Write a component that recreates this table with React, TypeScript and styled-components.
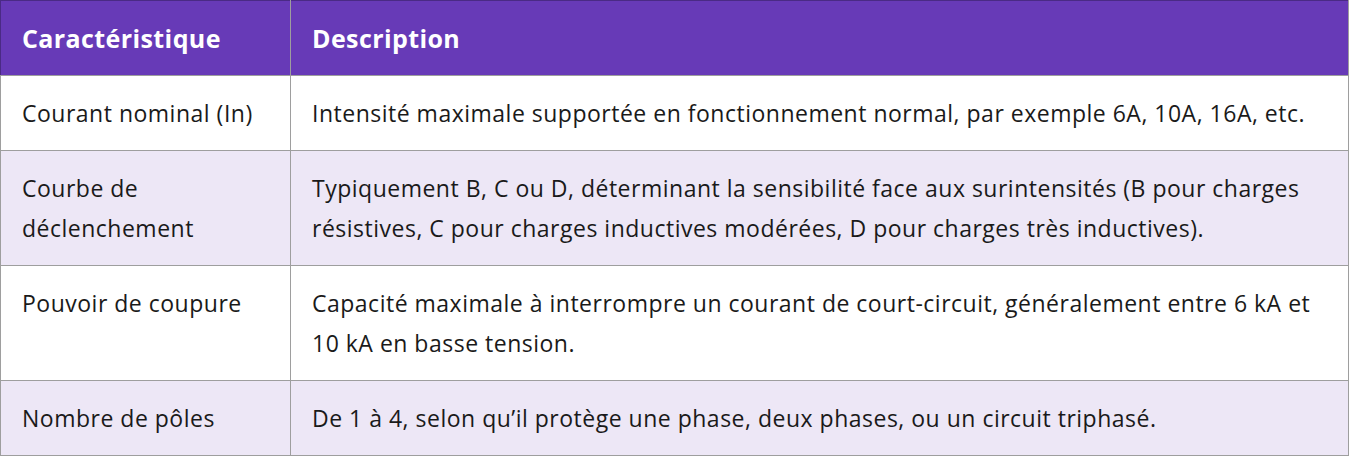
import styled, { createGlobalStyle } from "styled-components";

const GlobalStyle = createGlobalStyle`
  html, body {
    margin: 0;
    padding: 0;
    background: #ffffff;
  }
  body {
    font-family: "Open Sans", "Noto Sans", sans-serif;
    color: #1a1a1a;
  }
`;

const Table = styled.table`
  width: 1349px;
  border-collapse: collapse;
  table-layout: fixed;
  border: 1px solid #9e9e9e;
  font-size: 23px;
  line-height: 40px;
  letter-spacing: 0.5px;
`;

const HeadCell = styled.th<{ $first?: boolean }>`
  width: ${(p) => (p.$first ? "256px" : "auto")};
  padding: 17px 12px 17px 21px;
  background: #673ab7;
  color: #ffffff;
  font-size: 25px;
  font-weight: 700;
  letter-spacing: 0.4px;
  text-align: left;
  border: 1px solid #9e9e9e;
  border-color: #4a2a85 #9e9e9e #9e9e9e #4a2a85;
`;

const Row = styled.tr<{ $striped?: boolean }>`
  background: ${(p) => (p.$striped ? "#ede7f6" : "#ffffff")};
`;

const Cell = styled.td`
  padding: 17px 12px 17px 21px;
  border: 1px solid #9e9e9e;
  vertical-align: top;
`;

const rows = [
  {
    name: "Courant nominal (In)",
    text: "Intensité maximale supportée en fonctionnement normal, par exemple 6A, 10A, 16A, etc.",
  },
  {
    name: "Courbe de déclenchement",
    text: "Typiquement B, C ou D, déterminant la sensibilité face aux surintensités (B pour charges résistives, C pour charges inductives modérées, D pour charges très inductives).",
  },
  {
    name: "Pouvoir de coupure",
    text: "Capacité maximale à interrompre un courant de court-circuit, généralement entre 6 kA et 10 kA en basse tension.",
  },
  {
    name: "Nombre de pôles",
    text: "De 1 à 4, selon qu’il protège une phase, deux phases, ou un circuit triphasé.",
  },
];

export default function App() {
  return (
    <>
      <GlobalStyle />
      <Table>
        <thead>
          <tr>
            <HeadCell $first>Caractéristique</HeadCell>
            <HeadCell>Description</HeadCell>
          </tr>
        </thead>
        <tbody>
          {rows.map((r, i) => (
            <Row key={r.name} $striped={i % 2 === 1}>
              <Cell>{r.name}</Cell>
              <Cell>{r.text}</Cell>
            </Row>
          ))}
        </tbody>
      </Table>
    </>
  );
}
